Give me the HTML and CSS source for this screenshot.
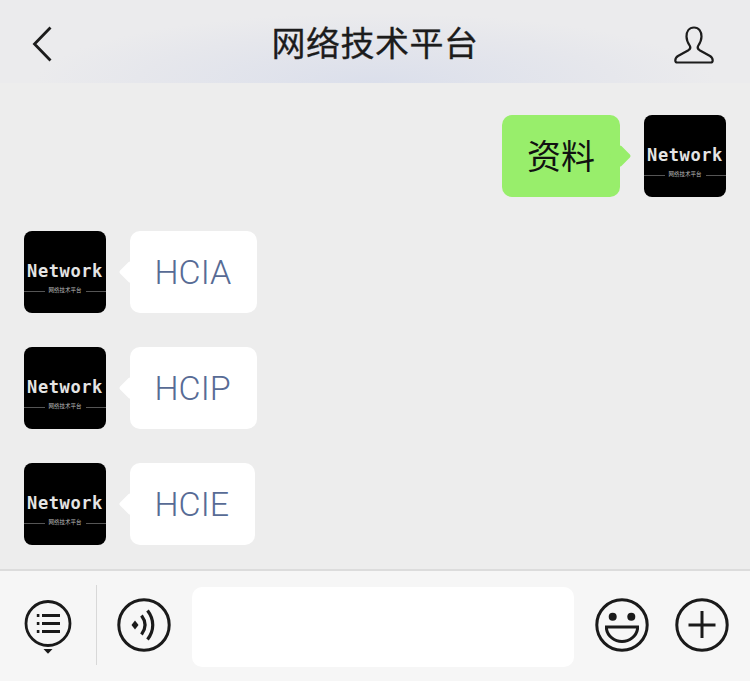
FILE: index.html
```html
<!DOCTYPE html>
<html lang="zh">
<head>
<meta charset="utf-8">
<title>网络技术平台</title>
<link rel="stylesheet" href="styles.css">
</head>
<body>
<div class="app">
  <header class="header">
    <svg class="ic-back" width="24" height="38" viewBox="0 0 24 38"><path d="M19.500 2.500 3.500 19l16 16.500" fill="none" stroke="#1c1c1c" stroke-width="2.800"/></svg>
    <h1 class="title">网络技术平台</h1>
    <svg class="ic-user" width="40" height="38" viewBox="0 0 40 38"><path d="M20 1.500c-5 0-7.500 4-7.500 9 0 4 1.700 7 3.400 9.500 1 1.700.3 3-1.500 4.200L4 30c-2 1.300-2.700 3-2.700 4.500 0 1.300.8 2 2 2h33.400c1.200 0 2-.7 2-2 0-1.500-.7-3.200-2.700-4.500l-10.400-5.800c-1.800-1.200-2.500-2.500-1.500-4.200 1.700-2.500 3.400-5.500 3.400-9.500 0-5-2.500-9-7.500-9Z" fill="none" stroke="#1c1c1c" stroke-width="2.200"/></svg>
  </header>
  <main class="chat">
    <div class="row row-me">
      <div class="bubble bubble-me">资料</div>
      <div class="avatar"><span class="logo">Network</span><div class="sub"><span class="rule"></span><span class="subtext">网络技术平台</span><span class="rule"></span></div></div>
    </div>
    <div class="row">
      <div class="avatar"><span class="logo">Network</span><div class="sub"><span class="rule"></span><span class="subtext">网络技术平台</span><span class="rule"></span></div></div>
      <div class="bubble bubble-other">HCIA</div>
    </div>
    <div class="row">
      <div class="avatar"><span class="logo">Network</span><div class="sub"><span class="rule"></span><span class="subtext">网络技术平台</span><span class="rule"></span></div></div>
      <div class="bubble bubble-other">HCIP</div>
    </div>
    <div class="row">
      <div class="avatar"><span class="logo">Network</span><div class="sub"><span class="rule"></span><span class="subtext">网络技术平台</span><span class="rule"></span></div></div>
      <div class="bubble bubble-other">HCIE</div>
    </div>
  </main>
  <footer class="footer">
    <svg class="ic-menu" width="48" height="56" viewBox="0 0 48 56"><circle cx="24" cy="23.500" r="22" fill="none" stroke="#1a1a1a" stroke-width="2.800"/><path d="M12.800 14h2.600v3h-2.600zM12.800 22h2.600v3h-2.600zM12.800 30h2.600v3h-2.600z" fill="#1a1a1a"/><path d="M18 15.500h18M18 23.500h18M18 31.500h18" stroke="#1a1a1a" stroke-width="2.800"/><path d="M19.500 49h9l-4.500 4.800z" fill="#1a1a1a"/></svg>
    <div class="divider"></div>
    <svg class="ic-voice" width="54" height="54" viewBox="0 0 54 54"><circle cx="27" cy="27" r="25.200" fill="none" stroke="#1a1a1a" stroke-width="3"/><path d="M14.500 27 18 22.500 21.500 27 18 31.500z" fill="#1a1a1a"/><path d="M24.500 17.500c4.500 6 4.500 13 0 19M30.500 12.500c7 9 7 20 0 29" fill="none" stroke="#1a1a1a" stroke-width="3.200"/></svg>
    <div class="input"></div>
    <svg class="ic-emoji" width="54" height="54" viewBox="0 0 54 54"><circle cx="27" cy="27" r="25.200" fill="none" stroke="#1a1a1a" stroke-width="3"/><circle cx="17.700" cy="18.700" r="4" fill="#1a1a1a"/><circle cx="36.300" cy="18.700" r="4" fill="#1a1a1a"/><path d="M11.500 29h31v2c-1 7-8 12.500-15.500 12.500s-14.500-5.500-15.500-12.500Z" fill="none" stroke="#1a1a1a" stroke-width="3"/></svg>
    <svg class="ic-plus" width="54" height="54" viewBox="0 0 54 54"><circle cx="27" cy="27" r="25.200" fill="none" stroke="#1a1a1a" stroke-width="3"/><path d="M27 13v27M13.500 27h27" stroke="#1a1a1a" stroke-width="3"/></svg>
  </footer>
</div>
</body>
</html>
```
FILE: styles.css
```css
* { box-sizing: border-box; }
html, body { margin: 0; padding: 0; }
body { width: 750px; height: 681px; overflow: hidden; font-family: "Noto Sans CJK SC", sans-serif; }
.app { width: 750px; height: 681px; display: flex; flex-direction: column; background: #ededed; }
.header { height: 83px; flex: none; display: flex; align-items: center; justify-content: space-between; padding: 0 36px 0 31px;
  background: radial-gradient(ellipse 340px 70px at 50% 100%, #dbdfeb 0%, #e6e7ec 70%, #ebebed 100%), #ebebed; }
.ic-back { margin-top: 5px; }
.ic-user { margin-top: 6px; }
.title { margin: 0 0 0 21px; font-size: 34px; font-weight: 400; line-height: 1; color: #1c1c1c; letter-spacing: 0.500px; -webkit-text-stroke: 0.300px #1c1c1c; }
.chat { flex: 1; display: flex; flex-direction: column; gap: 34px; padding: 32px 24px 0; }
.row { display: flex; gap: 24px; height: 82px; }
.row-me { justify-content: flex-end; }
.avatar { width: 82px; height: 82px; background: #000; border-radius: 8px; display: flex; flex-direction: column; align-items: center; padding-top: 30px; overflow: hidden; flex: none; }
.logo { font-family: "DejaVu Sans Mono", monospace; font-size: 17px; font-weight: 700; line-height: 20px; color: #e4e4e4; letter-spacing: 0.600px; white-space: nowrap; }
.sub { width: 100%; display: flex; align-items: center; gap: 4px; margin-top: 4px; height: 12px; }
.rule { flex: 1; height: 1px; background: #555; }
.subtext { font-size: 5.500px; color: #bbb; line-height: 1; white-space: nowrap; }
.bubble { position: relative; height: 82px; border-radius: 10px; display: flex; align-items: center; }
.bubble::after { content: ""; position: absolute; top: 33px; width: 16px; height: 16px; transform: rotate(45deg); border-radius: 2px; }
.bubble-me { background: #98ee6b; color: #111; padding: 0 25px 3px; font-weight: 400; font-size: 34px; }
.bubble-me::after { right: -8px; background: #98ee6b; }
.bubble-other { background: #fff; color: #576b95; padding: 0 26px 0 24.500px; font-family: Roboto, sans-serif; font-weight: 300; font-size: 34px; }
.bubble-other::after { left: -8px; background: #fff; }
.footer { height: 112px; flex: none; background: #f6f6f6; border-top: 2px solid #dcdcdc; display: flex; align-items: flex-start; padding-top: 14px; }
.ic-menu { margin: 15px 0 0 24px; flex: none; }
.divider { width: 1px; height: 80px; background: #d8d8d8; margin: 0 0 0 24px; }
.ic-voice { margin: 13px 0 0 20px; }
.input { width: 382px; height: 80px; background: #fff; border-radius: 10px; margin: 2px 0 0 21px; }
.ic-emoji { margin: 13px 0 0 21px; }
.ic-plus { margin: 13px 0 0 26px; }
```
